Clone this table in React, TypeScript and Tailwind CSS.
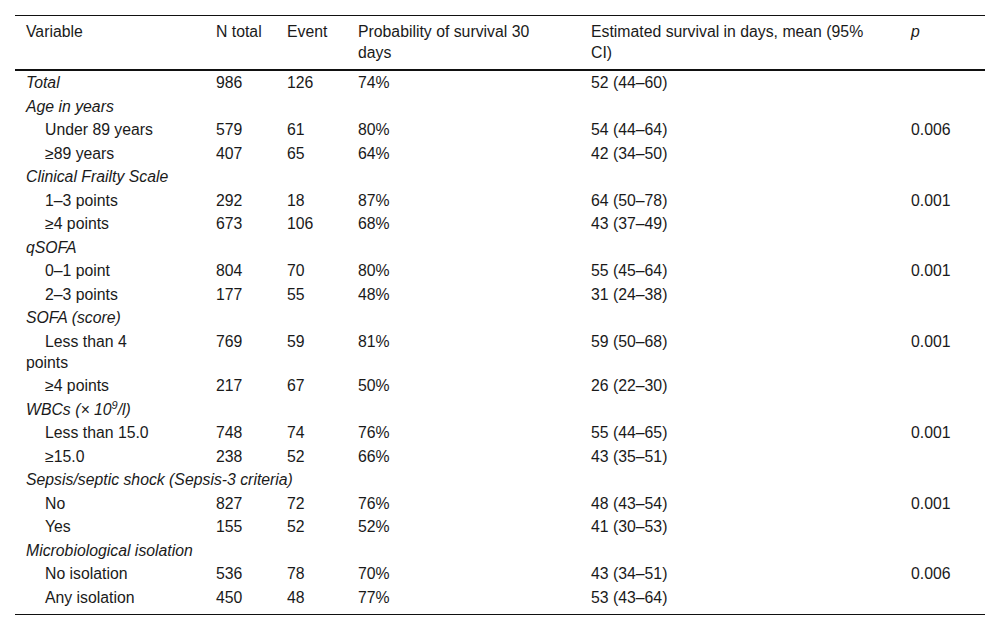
import React from 'react';

type Row =
  | { kind: 'group'; label: React.ReactNode }
  | { kind: 'data'; label: string; n: string; event: string; prob: string; est: string; p?: string; italic?: boolean; sub?: boolean };

const rows: Row[] = [
  { kind: 'data', label: 'Total', n: '986', event: '126', prob: '74%', est: '52 (44–60)', italic: true },
  { kind: 'group', label: 'Age in years' },
  { kind: 'data', sub: true, label: 'Under 89 years', n: '579', event: '61', prob: '80%', est: '54 (44–64)', p: '0.006' },
  { kind: 'data', sub: true, label: '≥89 years', n: '407', event: '65', prob: '64%', est: '42 (34–50)' },
  { kind: 'group', label: 'Clinical Frailty Scale' },
  { kind: 'data', sub: true, label: '1–3 points', n: '292', event: '18', prob: '87%', est: '64 (50–78)', p: '0.001' },
  { kind: 'data', sub: true, label: '≥4 points', n: '673', event: '106', prob: '68%', est: '43 (37–49)' },
  { kind: 'group', label: 'qSOFA' },
  { kind: 'data', sub: true, label: '0–1 point', n: '804', event: '70', prob: '80%', est: '55 (45–64)', p: '0.001' },
  { kind: 'data', sub: true, label: '2–3 points', n: '177', event: '55', prob: '48%', est: '31 (24–38)' },
  { kind: 'group', label: 'SOFA (score)' },
  { kind: 'data', sub: true, label: 'Less than 4 points', n: '769', event: '59', prob: '81%', est: '59 (50–68)', p: '0.001' },
  { kind: 'data', sub: true, label: '≥4 points', n: '217', event: '67', prob: '50%', est: '26 (22–30)' },
  { kind: 'group', label: <>WBCs (× 10<sup className="text-[11px] -top-[6px]">9</sup>/l)</> },
  { kind: 'data', sub: true, label: 'Less than 15.0', n: '748', event: '74', prob: '76%', est: '55 (44–65)', p: '0.001' },
  { kind: 'data', sub: true, label: '≥15.0', n: '238', event: '52', prob: '66%', est: '43 (35–51)' },
  { kind: 'group', label: 'Sepsis/septic shock (Sepsis-3 criteria)' },
  { kind: 'data', sub: true, label: 'No', n: '827', event: '72', prob: '76%', est: '48 (43–54)', p: '0.001' },
  { kind: 'data', sub: true, label: 'Yes', n: '155', event: '52', prob: '52%', est: '41 (30–53)' },
  { kind: 'group', label: 'Microbiological isolation' },
  { kind: 'data', sub: true, label: 'No isolation', n: '536', event: '78', prob: '70%', est: '43 (34–51)', p: '0.006' },
  { kind: 'data', sub: true, label: 'Any isolation', n: '450', event: '48', prob: '77%', est: '53 (43–64)' },
];

const cell = 'pl-[11px] pt-[1px] pb-[1.5px] align-top';
const head = 'font-normal pl-[11px] pt-[5px] pb-[6px] align-top';

export default function App() {
  return (
    <div className="w-[1000px] h-[630px] bg-white pt-[15px] px-[15px] text-[#1a1a1a] text-[15.8px] leading-[21px]" style={{ fontFamily: '"Liberation Sans", Arial, sans-serif' }}>
      <table className="w-[970px] table-fixed border-collapse border-t border-b border-[#111]">
        <colgroup>
          <col className="w-[190px]" />
          <col className="w-[71px]" />
          <col className="w-[71px]" />
          <col className="w-[233px]" />
          <col className="w-[320px]" />
          <col className="w-[85px]" />
        </colgroup>
        <thead>
          <tr className="border-b-2 border-[#111] text-left">
            <th className={head}>Variable</th>
            <th className={head}>N total</th>
            <th className={head}>Event</th>
            <th className={`${head} pr-[40px]`}>Probability of survival 30 days</th>
            <th className={`${head} pr-[22px]`}>Estimated survival in days, mean (95% CI)</th>
            <th className={`${head} italic`}>p</th>
          </tr>
        </thead>
        <tbody>
          {rows.map((r, i) =>
            r.kind === 'group' ? (
              <tr key={i}>
                <td colSpan={6} className={`${cell} italic`}>{r.label}</td>
              </tr>
            ) : (
              <tr key={i}>
                <td className={`${cell} pr-[44px] ${r.italic ? 'italic' : ''} ${r.sub ? 'indent-[19px]' : ''}`}>{r.label}</td>
                <td className={cell}>{r.n}</td>
                <td className={cell}>{r.event}</td>
                <td className={cell}>{r.prob}</td>
                <td className={cell}>{r.est}</td>
                <td className={cell}>{r.p ?? ''}</td>
              </tr>
            )
          )}
          <tr className="h-[5px]"><td colSpan={6} /></tr>
        </tbody>
      </table>
    </div>
  );
}
